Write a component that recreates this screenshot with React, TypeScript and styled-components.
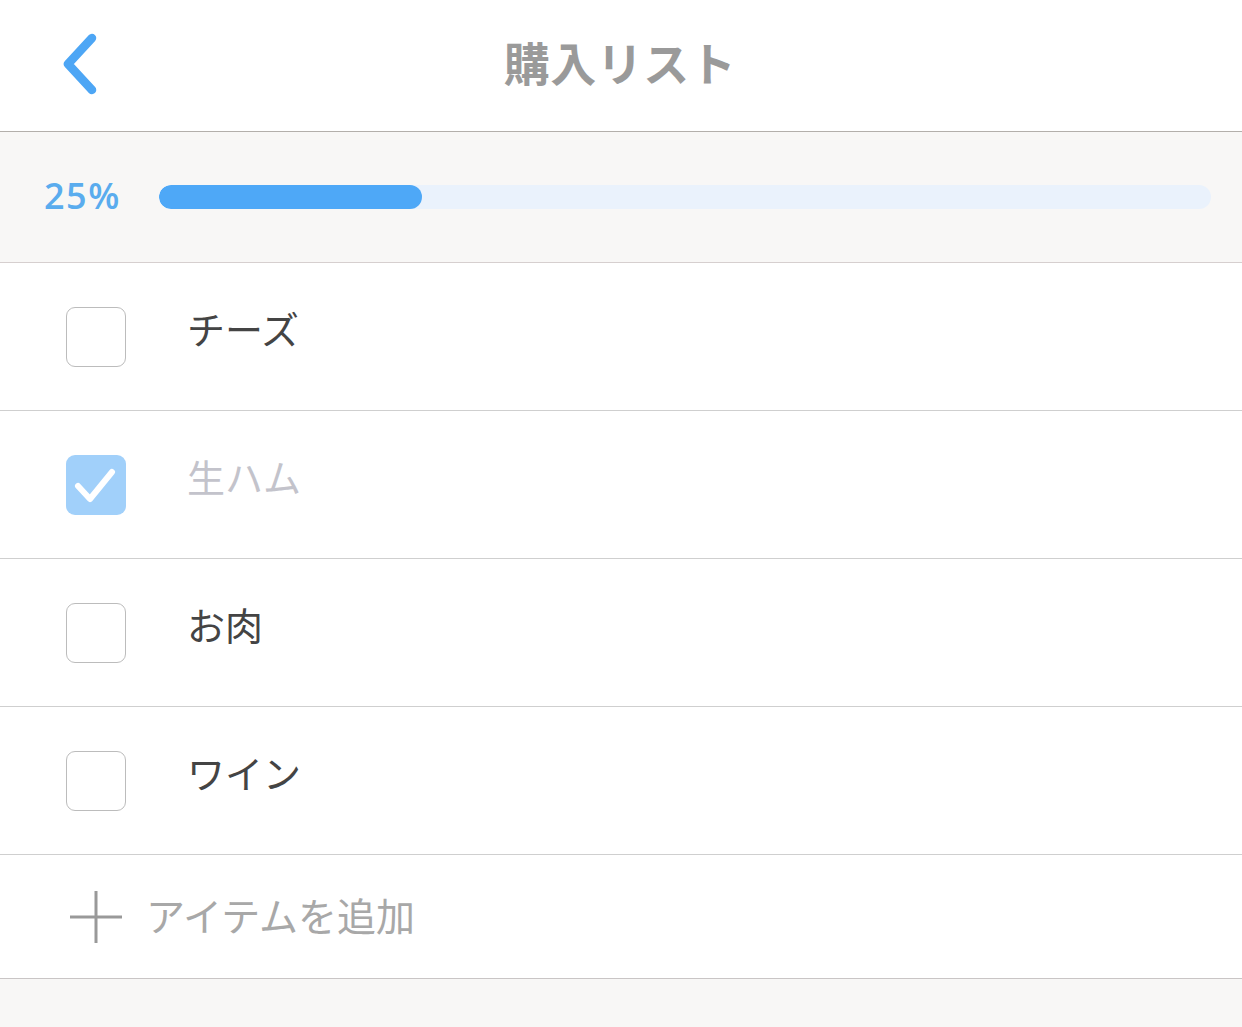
import { FunctionComponent } from "react";
import styled, { createGlobalStyle } from "styled-components";

const items = [
  { name: "チーズ", done: false },
  { name: "生ハム", done: true },
  { name: "お肉", done: false },
  { name: "ワイン", done: false },
];

const Global = createGlobalStyle`
  html, body {
    margin: 0;
    padding: 0;
    background: #f8f7f6;
  }
  body {
    font-family: "Noto Sans CJK JP", "Noto Sans", sans-serif;
  }
`;

const App: FunctionComponent = () => {
  const done = items.filter((i) => i.done).length;
  const pct = Math.round((done / items.length) * 100);
  return (
    <>
      <Global />
      <Screen>
        <Header>
          <BackButton aria-label="戻る">
            <svg width="40" height="64" viewBox="0 0 40 64" fill="none" stroke="#4da6f5"
                 strokeWidth="8.5" strokeLinecap="round" strokeLinejoin="round">
              <polyline points="30,6 6,32 30,58" />
            </svg>
          </BackButton>
          <Title>購入リスト</Title>
        </Header>
        <Progress>
          <Percent>{pct}%</Percent>
          <Track>
            <Fill style={{ width: `${pct}%` }} />
          </Track>
        </Progress>
        <List>
          {items.map((it) => (
            <Row key={it.name}>
              <Check checked={it.done}>
                {it.done && (
                  <svg width="60" height="60" viewBox="0 0 60 60" fill="none" stroke="white"
                       strokeWidth="6" strokeLinecap="round" strokeLinejoin="round">
                    <polyline points="12,31 24,44 46,17" />
                  </svg>
                )}
              </Check>
              <ItemName done={it.done}>{it.name}</ItemName>
            </Row>
          ))}
          <AddRow>
            <svg width="54" height="54" viewBox="0 0 54 54" stroke="#999" strokeWidth="3">
              <line x1="27" y1="1" x2="27" y2="53" />
              <line x1="1" y1="27" x2="53" y2="27" />
            </svg>
            <AddLabel>アイテムを追加</AddLabel>
          </AddRow>
        </List>
      </Screen>
    </>
  );
};

const Screen = styled.div`
  display: flex;
  flex-direction: column;
  min-height: 1027px;
  background: #f8f7f6;
`;

const Header = styled.header`
  position: relative;
  height: 131px;
  background: #ffffff;
  border-bottom: 1px solid #b3afab;
  display: flex;
  align-items: center;
  justify-content: center;
`;

const BackButton = styled.div`
  position: absolute;
  left: 62px;
  top: 32px;
  width: 40px;
  height: 64px;
`;

const Title = styled.h1`
  margin: 0;
  font-size: 46px;
  font-weight: 700;
  color: #9a9a9a;
  letter-spacing: 0.5px;
  transform: translate(-1px, -5px);
`;

const Progress = styled.section`
  height: 130px;
  display: flex;
  align-items: center;
  gap: 38px;
  padding: 0 31px 0 44px;
  background: #f8f7f6;
  border-bottom: 1px solid #d6cfcf;
`;

const Percent = styled.span`
  font-family: "Open Sans", "Noto Sans", sans-serif;
  font-size: 36px;
  font-weight: 600;
  color: #5aacee;
  width: 77px;
  line-height: 1;
  letter-spacing: 1.5px;
  white-space: nowrap;
  transform: translateY(-1px);
`;

const Track = styled.div`
  flex: 1;
  height: 24px;
  border-radius: 12px;
  background: #eaf2fc;
  overflow: hidden;
`;

const Fill = styled.div`
  height: 100%;
  border-radius: 12px;
  background: #4ea8f7;
`;

const List = styled.div`
  background: #ffffff;
`;

const Row = styled.div`
  height: 147px;
  display: flex;
  align-items: center;
  gap: 61px;
  padding-left: 66px;
  border-bottom: 1px solid #cfcfcf;
`;

const Check = styled.div<{ checked: boolean }>`
  box-sizing: border-box;
  width: 60px;
  height: 60px;
  border-radius: 9px;
  border: ${({ checked }) => (checked ? "none" : "1.5px solid #bcbcbc")};
  background: ${({ checked }) => (checked ? "#a1d0fa" : "#ffffff")};
  display: flex;
  align-items: center;
  justify-content: center;
`;

const ItemName = styled.span<{ done: boolean }>`
  font-size: 38px;
  color: ${({ done }) => (done ? "#c3c3cb" : "#444444")};
  transform: translateY(-9px);
`;

const AddRow = styled.div`
  height: 123px;
  display: flex;
  align-items: center;
  gap: 23px;
  padding-left: 69px;
  border-bottom: 1px solid #c9c5c5;
`;

const AddLabel = styled.span`
  font-size: 39px;
  color: #a8a8a8;
  transform: translateY(-3px);
`;

export default App;
